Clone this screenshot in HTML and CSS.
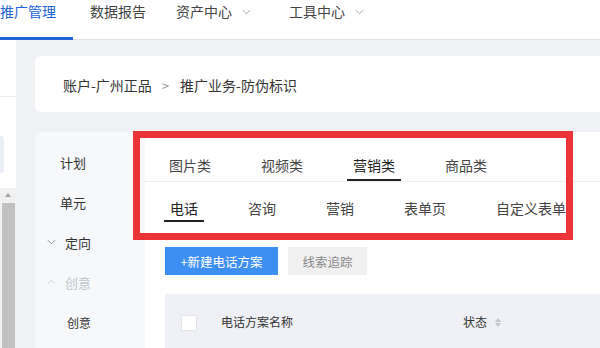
FILE: index.html
```html
<!DOCTYPE html>
<html lang="zh">
<head>
<meta charset="utf-8">
<link rel="stylesheet" href="styles.css">
</head>
<body>
<header class="topbar">
  <nav class="topnav">
    <a class="topnav-item active">推广管理</a>
    <a class="topnav-item">数据报告</a>
    <a class="topnav-item narrow">资产中心<svg class="chev" viewBox="0 0 10 6" width="9" height="6"><polyline points="1,1 5,5 9,1" fill="none" stroke="#a0a4ad" stroke-width="1.1"/></svg></a>
    <a class="topnav-item wide">工具中心<svg class="chev" viewBox="0 0 10 6" width="9" height="6"><polyline points="1,1 5,5 9,1" fill="none" stroke="#a0a4ad" stroke-width="1.1"/></svg></a>
  </nav>
</header>
<div class="page">
  <aside class="sidebar">
    <div class="sb-gap1"></div>
    <div class="sb-line"></div>
    <div class="sb-gap2"></div>
    <div class="sb-item"></div>
    <div class="sb-gap3"></div>
    <div class="sb-scroll">
      <div class="sb-arrow"></div>
      <div class="sb-thumb"></div>
    </div>
  </aside>
  <main class="main">
    <div class="crumb-card">
      <span class="crumb">账户-广州正品</span>
      <span class="crumb-sep">&gt;</span>
      <span class="crumb">推广业务-防伪标识</span>
    </div>
    <section class="card">
      <ul class="side-menu">
        <li class="menu-item">计划</li>
        <li class="menu-item">单元</li>
        <li class="menu-item group"><svg class="mchev" viewBox="0 0 10 6" width="9" height="6"><polyline points="1,1 5,5 9,1" fill="none" stroke="#8a8f99" stroke-width="1.1"/></svg>定向</li>
        <li class="menu-item group muted"><svg class="mchev" viewBox="0 0 10 6" width="9" height="6"><polyline points="1,5 5,1 9,5" fill="none" stroke="#c8ccd3" stroke-width="1.1"/></svg>创意</li>
        <li class="menu-item sub">创意</li>
      </ul>
      <div class="content">
        <div class="tabs tabs-main">
          <span class="tab">图片类</span>
          <span class="tab">视频类</span>
          <span class="tab active">营销类</span>
          <span class="tab">商品类</span>
        </div>
        <div class="tabs tabs-sub">
          <span class="tab active">电话</span>
          <span class="tab">咨询</span>
          <span class="tab">营销</span>
          <span class="tab">表单页</span>
          <span class="tab">自定义表单</span>
        </div>
        <div class="actions">
          <button class="btn btn-primary">+新建电话方案</button>
          <button class="btn btn-plain">线索追踪</button>
        </div>
        <div class="table-head">
          <span class="checkbox"></span>
          <span class="col-name">电话方案名称</span>
          <span class="col-status">状态<span class="sort"><i class="up"></i><i class="down"></i></span></span>
        </div>
      </div>
      <div class="highlight"></div>
    </section>
  </main>
</div>
</body>
</html>
```
FILE: styles.css
```css
* { box-sizing: border-box; }
html, body { margin: 0; padding: 0; }
body {
  width: 600px;
  height: 348px;
  overflow: hidden;
  background: #f0f1f5;
  font-family: "Noto Sans CJK SC", "Noto Sans", sans-serif;
  color: #333;
}

.topbar {
  height: 40px;
  background: #fff;
  border-bottom: 1px solid #dfe1e6;
}
.topnav {
  display: flex;
  margin-left: -17px;
  height: 39px;
}
.topnav-item {
  position: relative;
  display: flex;
  align-items: flex-start;
  padding: 0 17px;
  font-size: 14px;
  line-height: 22px;
  color: #444;
}
.topnav-item.narrow { margin-left: -4px; }
.topnav-item.wide { margin-left: 4px; }
.topnav-item.active { color: #2362d4; }
.topnav-item.active::after {
  content: "";
  position: absolute;
  left: 0;
  right: 0;
  bottom: -1px;
  height: 3px;
  background: #2362d4;
}
.chev { margin-left: 10px; margin-top: 9px; }

.page {
  display: flex;
  height: 308px;
}
.sidebar {
  width: 16px;
  background: #fff;
  display: flex;
  flex-direction: column;
}
.sb-gap1 { height: 56px; }
.sb-line { height: 1px; background: #ececef; }
.sb-gap2 { height: 39px; }
.sb-item {
  width: 4px;
  height: 37px;
  background: #e9edf6;
  border-radius: 0 3px 3px 0;
}
.sb-gap3 { height: 15px; }
.sb-scroll {
  flex: 1;
  background: #f1f1f1;
  display: flex;
  flex-direction: column;
  align-items: center;
  padding-top: 5px;
}
.sb-arrow {
  width: 0;
  height: 0;
  border-left: 3px solid transparent;
  border-right: 3px solid transparent;
  border-bottom: 4px solid #a3a3a3;
}
.sb-thumb {
  margin-top: 6px;
  width: 13px;
  flex: 1;
  background: #c1c1c1;
}

.main {
  flex: 1;
  padding: 16px 0 0 19px;
  display: flex;
  flex-direction: column;
  gap: 20px;
}
.crumb-card {
  height: 56px;
  background: #fff;
  border-radius: 6px 0 0 6px;
  display: flex;
  align-items: center;
  padding: 2px 0 0 28px;
  font-size: 14px;
}
.crumb { color: #333; }
.crumb-sep { color: #999; margin: 0 11px 0 10px; font-size: 13px; }

.card {
  position: relative;
  flex: 1;
  display: flex;
  background: #fff;
  border-radius: 6px 0 0 0;
}
.side-menu {
  list-style: none;
  margin: 0;
  padding: 10px 0 0 0;
  width: 110px;
  background: #f7f8fa;
  border-radius: 6px 0 0 0;
}
.menu-item {
  height: 40px;
  display: flex;
  align-items: center;
  padding-left: 25px;
  font-size: 13px;
  color: #333;
}
.menu-item.group { padding-left: 12px; }
.mchev { margin-right: 9px; }
.menu-item.muted { color: #c0c4cc; }
.menu-item.sub { padding-left: 32px; font-size: 12px; }

.content {
  flex: 1;
  display: flex;
  flex-direction: column;
}
.tabs {
  display: flex;
  gap: 38px;
}
.tab {
  position: relative;
  padding: 0 6px 6px;
  font-size: 14px;
  line-height: 20px;
  color: #444;
  white-space: nowrap;
}
.tab.active { color: #222; }
.tab.active::after {
  content: "";
  position: absolute;
  left: 0;
  right: 0;
  bottom: 0;
  height: 2px;
  background: #222;
}
.tabs-main {
  height: 50px;
  padding-left: 18px;
  align-items: flex-end;
  border-bottom: 1px solid #ebedf0;
}
.tabs-sub {
  padding-top: 16px;
  padding-left: 19px;
}
.tabs-sub .tab { padding-bottom: 4px; }

.actions {
  display: flex;
  gap: 10px;
  padding: 25px 0 0 20px;
}
.btn {
  height: 28px;
  border: 0;
  font-family: inherit;
  font-size: 12.5px;
  padding: 0;
}
.btn-primary {
  width: 113px;
  background: #3d8ff2;
  color: #fff;
}
.btn-plain {
  width: 79px;
  background: #f0f0f0;
  color: #888;
}

.table-head {
  margin: 19px 0 0 20px;
  flex: 1;
  background: #eef0f5;
  display: flex;
  align-items: flex-start;
  padding-top: 19px;
  font-size: 12px;
  color: #333;
}
.checkbox {
  width: 16px;
  height: 16px;
  margin: 2px 0 0 16px;
  background: #fff;
  border: 1px solid #e3e5ea;
  border-radius: 1px;
}
.col-name { margin-left: 24px; line-height: 18px; }
.col-status {
  margin-left: 170px;
  line-height: 18px;
  display: flex;
  align-items: center;
}
.sort {
  display: flex;
  flex-direction: column;
  gap: 1px;
  margin-left: 8px;
}
.sort i {
  display: block;
  width: 0;
  height: 0;
  border-left: 3px solid transparent;
  border-right: 3px solid transparent;
}
.sort .up { border-bottom: 4px solid #c0c4cc; }
.sort .down { border-top: 4px solid #c0c4cc; }

.highlight {
  position: absolute;
  left: 98px;
  top: -1px;
  width: 440px;
  height: 109px;
  border: 7px solid #ec3338;
  pointer-events: none;
}
```
